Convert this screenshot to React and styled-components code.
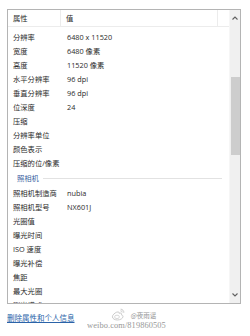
import React from 'react';
import styled, { createGlobalStyle } from 'styled-components';

const GlobalStyle = createGlobalStyle`
  html, body {
    margin: 0;
    background: #ffffff;
  }
  body {
    font-family: "Open Sans", "Noto Sans CJK SC", sans-serif;
    color: #2b2b2b;
  }
`;

const Page = styled.div`
  position: relative;
  width: 250px;
  height: 336px;
  padding: 9px 9px 0 7px;
  box-sizing: border-box;
  overflow: hidden;
`;

const ListBox = styled.div`
  display: flex;
  height: 295px;
  border: 1px solid #b4b4b4;
  box-sizing: border-box;
  background: #ffffff;
  overflow: hidden;
`;

const List = styled.div`
  flex: 1;
  min-width: 0;
  overflow: hidden;
`;

const Header = styled.div`
  display: grid;
  grid-template-columns: 53px 1fr 11px;
  height: 16px;
  border-bottom: 1px solid #ececec;
  font-size: 7.3px;
  line-height: 16px;
`;

const HeadCell = styled.div`
  padding-left: ${(p) => p.$pad}px;
  border-right: 1px solid ${(p) => (p.$divider ? '#ececec' : 'transparent')};
`;

const Rows = styled.div`
  padding-top: 3px;
`;

const Row = styled.div`
  display: grid;
  grid-template-columns: 54px 1fr;
  height: 14px;
  font-size: 7.3px;
  line-height: 14px;
  white-space: nowrap;
`;

const Label = styled.span`
  padding-left: 5px;
`;

const Value = styled.span`
  padding-left: 5px;
`;

const Group = styled.div`
  display: flex;
  align-items: center;
  gap: 4px;
  height: 16px;
  padding: 0 7px 0 9px;
  font-size: 7.3px;
  color: #3a5fa0;
`;

const GroupLine = styled.div`
  flex: 1;
  height: 1px;
  background: #e2e2e2;
`;

const Scrollbar = styled.div`
  display: flex;
  flex-direction: column;
  align-items: center;
  width: 10px;
  background: #f0f0f0;
  border-left: 1px solid #f6f6f6;
`;

const Arrow = styled.div`
  display: flex;
  align-items: center;
  justify-content: center;
  height: ${(p) => p.$h}px;
`;

const Track = styled.div`
  flex: 1;
  width: 100%;
  display: flex;
  flex-direction: column;
  align-items: center;
`;

const Thumb = styled.div`
  width: 9px;
  height: 78px;
  margin-top: ${(p) => p.$top}px;
  background: #cdcdcd;
`;

const Footer = styled.div`
  padding-top: 9px;
  font-size: 7.5px;
  line-height: 10px;
`;

const Link = styled.a`
  color: #2a63a8;
  text-decoration: underline;
  font-family: "Noto Sans CJK SC", sans-serif;
`;

const Watermark = styled.div`
  position: absolute;
  left: 87px;
  top: 308px;
  display: flex;
  flex-direction: column;
  align-items: center;
  color: #9a9a9a;
  opacity: 0.9;
`;

const Handle = styled.div`
  display: flex;
  align-items: center;
  gap: 6px;
  padding-left: 14px;
  font-size: 6.5px;
  font-family: "Noto Sans CJK SC", sans-serif;
  color: #8a8a8a;
`;

const Url = styled.div`
  font-family: "Liberation Serif", serif;
  font-size: 8.4px;
  line-height: 10px;
  letter-spacing: 0.1px;
  color: #8e8e8e;
`;

const Chevron = ({ up }) => (
  <svg width="6" height="4" viewBox="0 0 6 4">
    <path
      d={up ? 'M0.5 3.5 L3 1 L5.5 3.5' : 'M0.5 0.5 L3 3 L5.5 0.5'}
      fill="none"
      stroke="#606060"
      strokeWidth="1.1"
    />
  </svg>
);

const WeiboLogo = () => (
  <svg width="14" height="13" viewBox="0 0 14 13">
    <path
      d="M5.6 4.2c-2 0.9-4.2 2.8-4.2 4.6 0 1.9 2.5 3.2 5 3.2 3 0 5.6-1.6 5.6-3.5 0-1.2-1.2-1.5-1.6-1.6 0.4-0.8 0.3-1.7-0.9-1.8-0.6 0-1.3 0.3-1.3 0.3 0.2-0.9-0.1-1.9-2.6-1.2z"
      fill="none"
      stroke="#b8b8b8"
      strokeWidth="0.8"
    />
    <ellipse cx="6" cy="8.9" rx="2.4" ry="1.7" fill="none" stroke="#c4c4c4" strokeWidth="0.7" />
    <path d="M9.6 1.2a3.2 3.2 0 0 1 3.2 3.6" fill="none" stroke="#b8b8b8" strokeWidth="0.8" />
    <path d="M9.4 2.8a1.5 1.5 0 0 1 1.7 1.7" fill="none" stroke="#b8b8b8" strokeWidth="0.7" />
  </svg>
);

const imageRows = [
  ['分辨率', '6480 x 11520'],
  ['宽度', '6480 像素'],
  ['高度', '11520 像素'],
  ['水平分辨率', '96 dpi'],
  ['垂直分辨率', '96 dpi'],
  ['位深度', '24'],
  ['压缩', ''],
  ['分辨率单位', ''],
  ['颜色表示', ''],
  ['压缩的位/像素', ''],
];

const cameraRows = [
  ['照相机制造商', 'nubia'],
  ['照相机型号', 'NX601J'],
  ['光圈值', ''],
  ['曝光时间', ''],
  ['ISO 速度', ''],
  ['曝光补偿', ''],
  ['焦距', ''],
  ['最大光圈', ''],
  ['测光模式', ''],
];

const PropRow = ({ label, value }) => (
  <Row>
    <Label>{label}</Label>
    <Value>{value}</Value>
  </Row>
);

export default function App() {
  return (
    <>
      <GlobalStyle />
      <Page>
        <ListBox>
          <List>
            <Header>
              <HeadCell $pad={5} $divider>属性</HeadCell>
              <HeadCell $pad={5} $divider>值</HeadCell>
              <HeadCell $pad={0} />
            </Header>
            <Rows>
              {imageRows.map(([l, v]) => (
                <PropRow key={l} label={l} value={v} />
              ))}
              <Group>
                照相机
                <GroupLine />
              </Group>
              {cameraRows.map(([l, v]) => (
                <PropRow key={l} label={l} value={v} />
              ))}
            </Rows>
          </List>
          <Scrollbar>
            <Arrow $h={16}>
              <Chevron up />
            </Arrow>
            <Track>
              <Thumb $top={51} />
            </Track>
            <Arrow $h={17}>
              <Chevron />
            </Arrow>
          </Scrollbar>
        </ListBox>
        <Footer>
          <Link href="#">删除属性和个人信息</Link>
        </Footer>
        <Watermark>
          <Handle>
            <WeiboLogo />
            @夜雨谣
          </Handle>
          <Url>weibo.com/819860505</Url>
        </Watermark>
      </Page>
    </>
  );
}
